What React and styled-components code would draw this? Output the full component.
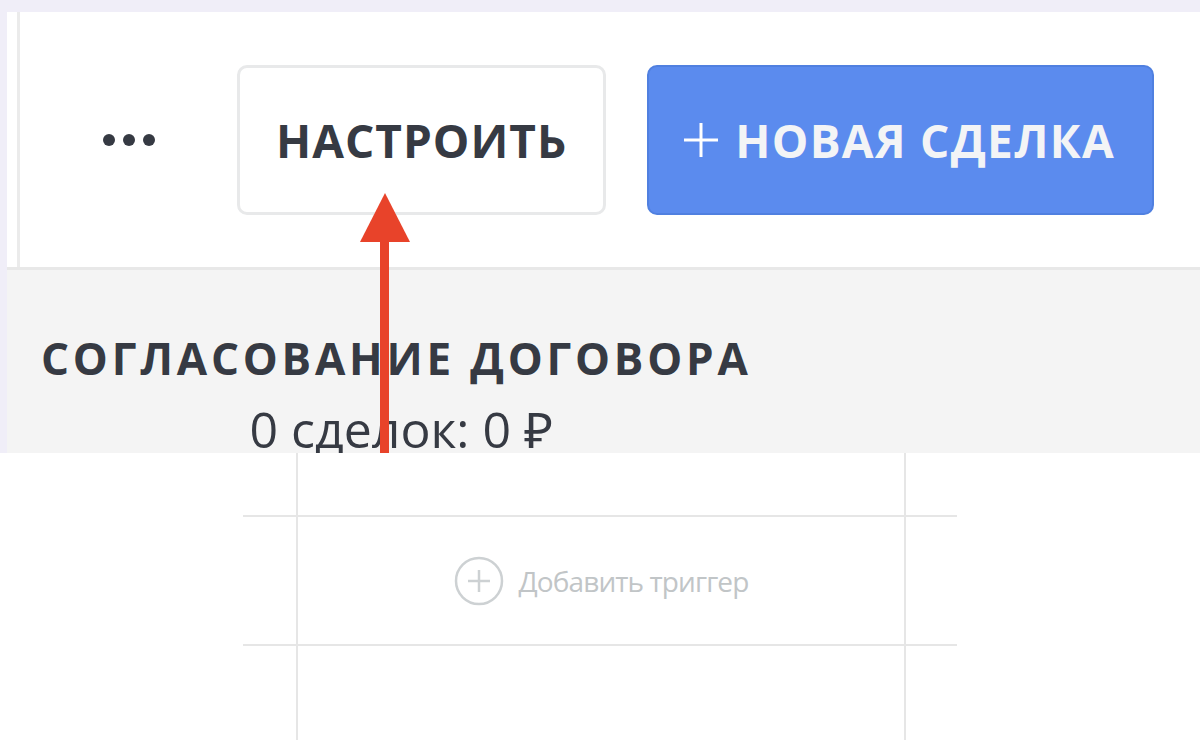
import React from "react";
import styled, { createGlobalStyle } from "styled-components";

const GlobalStyle = createGlobalStyle`
  body {
    margin: 0;
    background: #f0eef8;
    font-family: "Open Sans", "Noto Sans", sans-serif;
  }
`;

const Page = styled.div`
  position: relative;
  width: 1200px;
  height: 740px;
  overflow: hidden;
  background: #f0eef8;
  display: flex;
  flex-direction: column;
`;

const Header = styled.header`
  margin: 12px 0 0 7px;
  height: 255px;
  background: #fff;
  border-bottom: 3px solid #e8e8e8;
  padding-left: 10px;
  display: flex;
`;

const HeaderInner = styled.div`
  flex: 1;
  border-left: 3px solid #ebebeb;
  display: flex;
  align-items: center;
  padding-left: 83px;
`;

const Dots = styled.div`
  display: flex;
  gap: 8px;
  margin-right: 82px;

  span {
    width: 12px;
    height: 12px;
    border-radius: 50%;
    background: #363a43;
  }
`;

const Button = styled.button`
  height: 150px;
  box-sizing: border-box;
  padding: ${({ $primary }) => ($primary ? "0 37px 0 34px" : "0 36px")};
  border-radius: 10px;
  border: ${({ $primary }) => ($primary ? "2px solid #5080e0" : "3px solid #e8e9ea")};
  background: ${({ $primary }) => ($primary ? "#5b8bee" : "#fff")};
  color: ${({ $primary }) => ($primary ? "#f3f4f6" : "#363a43")};
  font-family: "Open Sans", sans-serif;
  font-weight: 700;
  font-size: 46px;
  letter-spacing: ${({ $primary }) => ($primary ? "1.3px" : "1px")};
  display: flex;
  align-items: center;
  gap: 16px;
  margin-right: 41px;
`;

const PlusSign = styled.svg`
  width: 36px;
  height: 36px;
  flex: none;
`;

const Stage = styled.section`
  margin-left: 7px;
  height: 183px;
  background: #f4f4f4;
  padding-left: 34px;
  box-sizing: border-box;
  overflow: hidden;
`;

const StageHead = styled.div`
  display: inline-flex;
  flex-direction: column;
  align-items: center;
  padding-top: 58px;
`;

const StageTitle = styled.h2`
  margin: 0;
  font-family: "Open Sans", sans-serif;
  font-weight: 700;
  font-size: 44px;
  letter-spacing: 3.8px;
  line-height: 60px;
  color: #363a43;
`;

const StageMeta = styled.div`
  margin-top: 11px;
  margin-left: 10px;
  font-size: 50px;
  line-height: 60px;
  color: #363a43;
`;

const Board = styled.div`
  flex: 1;
  background: #fff;
  padding-left: 243px;
`;

const Grid = styled.div`
  display: grid;
  width: 714px;
  grid-template-columns: 53px 610px 51px;
  grid-template-rows: 62px 131px 94px;
`;

const Cell = styled.div`
  box-sizing: border-box;
  border-left: ${({ $mid }) => ($mid ? "2px solid #e6e6e6" : "none")};
  border-right: ${({ $mid }) => ($mid ? "2px solid #e6e6e6" : "none")};
  border-top: ${({ $row }) => ($row ? "2px solid #e6e6e6" : "none")};
  border-bottom: ${({ $row }) => ($row ? "2px solid #e6e6e6" : "none")};
  display: flex;
  align-items: center;
  justify-content: center;
`;

const AddTrigger = styled.div`
  display: flex;
  align-items: center;
  gap: 15px;
  color: #c1c5c7;
  font-size: 28px;
  letter-spacing: -0.9px;
`;

const Arrow = styled.svg`
  position: absolute;
  left: 355px;
  top: 190px;
  width: 60px;
  height: 263px;
`;

const App = () => {
  const rows = [false, true, false];
  return (
    <Page>
      <GlobalStyle />
      <Header>
        <HeaderInner>
          <Dots>
            <span />
            <span />
            <span />
          </Dots>
          <Button>НАСТРОИТЬ</Button>
          <Button $primary>
            <PlusSign viewBox="0 0 36 36">
              <path d="M18 1v34M1 18h34" stroke="#fff" strokeWidth="3" />
            </PlusSign>
            НОВАЯ СДЕЛКА
          </Button>
        </HeaderInner>
      </Header>
      <Stage>
        <StageHead>
          <StageTitle>СОГЛАСОВАНИЕ ДОГОВОРА</StageTitle>
          <StageMeta>0 сделок: 0 ₽</StageMeta>
        </StageHead>
      </Stage>
      <Board>
        <Grid>
          {rows.map((row, i) => (
            <React.Fragment key={i}>
              <Cell $row={row} />
              <Cell $row={row} $mid>
                {row && (
                  <AddTrigger>
                    <svg width="50" height="50" viewBox="0 0 50 50">
                      <circle cx="25" cy="25" r="23" fill="none" stroke="#cdd1d3" strokeWidth="2.5" />
                      <path d="M25 14v22M14 25h22" stroke="#cdd1d3" strokeWidth="2.5" />
                    </svg>
                    Добавить триггер
                  </AddTrigger>
                )}
              </Cell>
              <Cell $row={row} />
            </React.Fragment>
          ))}
        </Grid>
      </Board>
      <Arrow viewBox="0 0 60 263">
        <path d="M30 3 L55 52 L5 52 Z" fill="#e8432a" />
        <rect x="25" y="50" width="9" height="213" fill="#e8432a" />
      </Arrow>
    </Page>
  );
};

export default App;
